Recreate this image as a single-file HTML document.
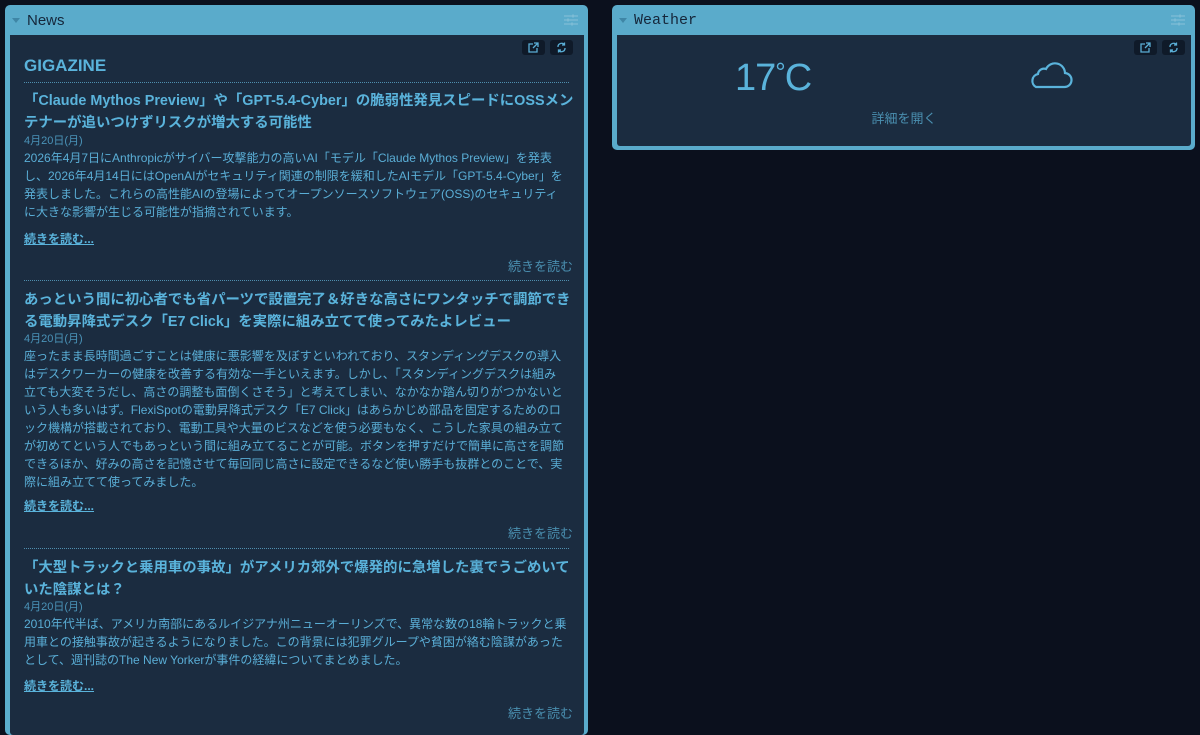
<!DOCTYPE html><html><head><meta charset="utf-8"><style>
*{margin:0;padding:0;box-sizing:border-box}
body{width:1200px;height:723px;background:#0b101d;overflow:hidden;font-family:"Liberation Sans","Noto Sans CJK JP",sans-serif;color:#5aaed6;position:relative}
.panel{position:absolute;background:#5aabcb;border-radius:5px}
.hdr{position:absolute;left:0;top:0;right:0;height:30px;color:#15263a;font-size:15px}
.tri{position:absolute;left:7px;top:13px;width:0;height:0;border-left:4px solid transparent;border-right:4px solid transparent;border-top:5px solid #3f86a6}
.ttl{position:absolute;left:22px;top:7px}
.cfg{position:absolute;right:10px;top:9px}
.inner{position:absolute;left:5px;right:4px;top:30px;background:#1b2c40;border-radius:0 0 3px 3px}
.btn{position:absolute;top:5px;width:23px;height:15px;background:#0f1a29;border-radius:3px}
.btn svg{position:absolute;left:6px;top:2px}
.a{position:absolute;left:14px;width:555px;white-space:nowrap}
.t{font-size:14.4px;font-weight:bold;line-height:22px;color:#5ab3db}
.d{font-size:11px;line-height:18px;color:#4a93b8}
.b{font-size:12px;line-height:18px;color:#5aaed6}
.m{font-size:12px;font-weight:bold;text-decoration:underline;color:#5ab3db}
.r{position:absolute;right:11px;font-size:13px;color:#4a8fb0}
.hr{position:absolute;left:14px;width:545px;border-top:1px dotted #4f8eae}
</style></head><body>
<div class="panel" style="left:5px;top:5px;width:583px;height:730px">
 <div class="hdr"><div class="tri"></div><div class="ttl">News</div>
 <svg class="cfg" width="14" height="12" viewBox="0 0 14 12" stroke="#7fbdd6" stroke-width="1.2"><path d="M0 2h14M0 6h14M0 10h14"/><path d="M9 0.5v3M4 4.5v3M8 8.5v3" stroke-width="1.6"/></svg></div>
 <div class="inner" style="height:700px">
  <div class="btn" style="left:512px"><svg width="11" height="11" viewBox="0 0 11 11" fill="none" stroke="#5aaed6" stroke-width="1.3"><path d="M5 2H1v8h8V6M5 6l5-5M6 1h4v4"/></svg></div>
  <div class="btn" style="left:540px"><svg width="11" height="11" viewBox="0 0 11 11" fill="none" stroke="#5aaed6" stroke-width="1.3"><path d="M2 5a3.5 3.5 0 0 1 6.5-2M9 6a3.5 3.5 0 0 1-6.5 2M8.5 0.5v2.5h-2.5M2.5 10.5v-2.5h2.5"/></svg></div>
  <div class="a" style="top:21px;font-size:17px;font-weight:bold;color:#5ab3db">GIGAZINE</div>
  <div class="hr" style="top:47px"></div>
  <div class="a t" style="top:55px">「Claude Mythos Preview」や「GPT-5.4-Cyber」の脆弱性発見スピードにOSSメン<br>テナーが追いつけずリスクが増大する可能性</div>
  <div class="a d" style="top:97px">4月20日(月)</div>
  <div class="a b" style="top:114px">2026年4月7日にAnthropicがサイバー攻撃能力の高いAI「モデル「Claude Mythos Preview」を発表<br>し、2026年4月14日にはOpenAIがセキュリティ関連の制限を緩和したAIモデル「GPT-5.4-Cyber」を<br>発表しました。これらの高性能AIの登場によってオープンソースソフトウェア(OSS)のセキュリティ<br>に大きな影響が生じる可能性が指摘されています。</div>
  <div class="a m" style="top:195px">続きを読む...</div>
  <div class="r" style="top:221px">続きを読む</div>
  <div class="hr" style="top:245px"></div>
  <div class="a t" style="top:254px">あっという間に初心者でも省パーツで設置完了＆好きな高さにワンタッチで調節でき<br>る電動昇降式デスク「E7 Click」を実際に組み立てて使ってみたよレビュー</div>
  <div class="a d" style="top:295px">4月20日(月)</div>
  <div class="a b" style="top:312px">座ったまま長時間過ごすことは健康に悪影響を及ぼすといわれており、スタンディングデスクの導入<br>はデスクワーカーの健康を改善する有効な一手といえます。しかし、「スタンディングデスクは組み<br>立ても大変そうだし、高さの調整も面倒くさそう」と考えてしまい、なかなか踏ん切りがつかないと<br>いう人も多いはず。FlexiSpotの電動昇降式デスク「E7 Click」はあらかじめ部品を固定するためのロ<br>ック機構が搭載されており、電動工具や大量のビスなどを使う必要もなく、こうした家具の組み立て<br>が初めてという人でもあっという間に組み立てることが可能。ボタンを押すだけで簡単に高さを調節<br>できるほか、好みの高さを記憶させて毎回同じ高さに設定できるなど使い勝手も抜群とのことで、実<br>際に組み立てて使ってみました。</div>
  <div class="a m" style="top:462px">続きを読む...</div>
  <div class="r" style="top:488px">続きを読む</div>
  <div class="hr" style="top:513px"></div>
  <div class="a t" style="top:522px">「大型トラックと乗用車の事故」がアメリカ郊外で爆発的に急増した裏でうごめいて<br>いた陰謀とは？</div>
  <div class="a d" style="top:563px">4月20日(月)</div>
  <div class="a b" style="top:580px">2010年代半ば、アメリカ南部にあるルイジアナ州ニューオーリンズで、異常な数の18輪トラックと乗<br>用車との接触事故が起きるようになりました。この背景には犯罪グループや貧困が絡む陰謀があった<br>として、週刊誌のThe New Yorkerが事件の経緯についてまとめました。</div>
  <div class="a m" style="top:642px">続きを読む...</div>
  <div class="r" style="top:668px">続きを読む</div>
 </div>
</div>
<div class="panel" style="left:612px;top:5px;width:583px;height:145px">
 <div class="hdr"><div class="tri"></div><div class="ttl" style="font-family:'Liberation Mono',monospace;font-size:15px;top:7px">Weather</div>
 <svg class="cfg" width="14" height="12" viewBox="0 0 14 12" stroke="#7fbdd6" stroke-width="1.2"><path d="M0 2h14M0 6h14M0 10h14"/><path d="M9 0.5v3M4 4.5v3M8 8.5v3" stroke-width="1.6"/></svg></div>
 <div class="inner" style="height:111px">
  <div class="btn" style="left:517px"><svg width="11" height="11" viewBox="0 0 11 11" fill="none" stroke="#5aaed6" stroke-width="1.3"><path d="M5 2H1v8h8V6M5 6l5-5M6 1h4v4"/></svg></div>
  <div class="btn" style="left:545px"><svg width="11" height="11" viewBox="0 0 11 11" fill="none" stroke="#5aaed6" stroke-width="1.3"><path d="M2 5a3.5 3.5 0 0 1 6.5-2M9 6a3.5 3.5 0 0 1-6.5 2M8.5 0.5v2.5h-2.5M2.5 10.5v-2.5h2.5"/></svg></div>
  <div style="position:absolute;left:118px;top:22px;font-size:38px;color:#5ab3db;letter-spacing:-1px">17<span style="font-size:26px;vertical-align:9px">°</span>C</div>
  <svg style="position:absolute;left:410px;top:24px" width="46" height="30" viewBox="0 0 46 30" fill="none" stroke="#5ab3db" stroke-width="2.2"><path d="M9 28h28a7 7 0 0 0 1-14 10 10 0 0 0-19-4 6 6 0 0 0-8 5 7 7 0 0 0-2 13z"/></svg>
  <div style="position:absolute;left:0;right:0;top:73px;text-align:center;font-size:13px;color:#4a8fb0">詳細を開く</div>
 </div>
</div>
</body></html>
